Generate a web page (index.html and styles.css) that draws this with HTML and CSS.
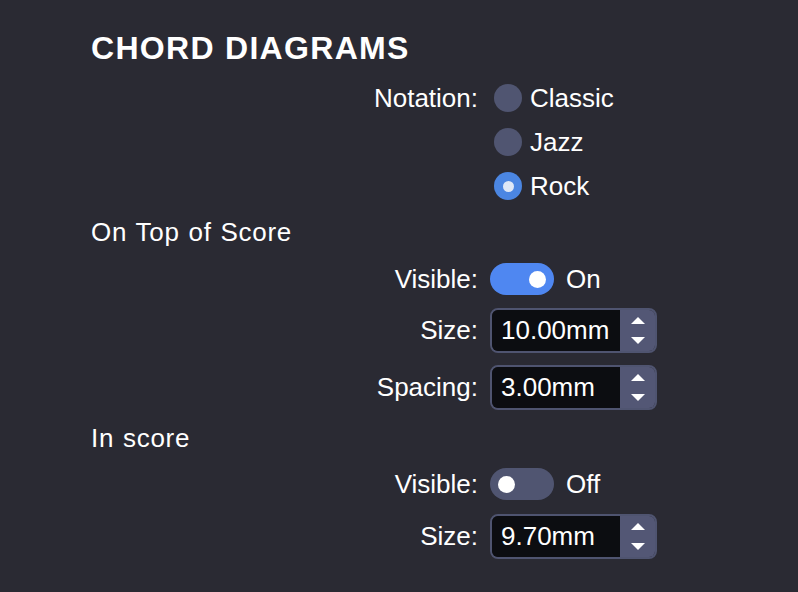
FILE: index.html
```html
<!DOCTYPE html>
<html lang="en">

<head>
    <meta charset="UTF-8">
    <title>Chord Diagrams</title>
    <link rel="stylesheet" href="styles.css">
</head>

<body>
    <div class="panel">
        <h2 class="title">CHORD DIAGRAMS</h2>
        <div class="form">
            <div class="label label-top">Notation:</div>
            <div class="radios">
                <label class="radio"><span class="dot"></span>Classic</label>
                <label class="radio"><span class="dot"></span>Jazz</label>
                <label class="radio"><span class="dot checked"></span>Rock</label>
            </div>

            <div class="section">On Top of Score</div>

            <div class="label row-toggle">Visible:</div>
            <div class="control row-toggle">
                <span class="toggle on"><span class="knob"></span></span>
                <span class="toggle-text">On</span>
            </div>

            <div class="label row-spin">Size:</div>
            <div class="control row-spin">
                <div class="spin">
                    <span class="spin-value">10.00mm</span>
                    <span class="spin-buttons">
                        <span class="arrow up"></span>
                        <span class="arrow down"></span>
                    </span>
                </div>
            </div>

            <div class="label row-spin">Spacing:</div>
            <div class="control row-spin">
                <div class="spin">
                    <span class="spin-value">3.00mm</span>
                    <span class="spin-buttons">
                        <span class="arrow up"></span>
                        <span class="arrow down"></span>
                    </span>
                </div>
            </div>

            <div class="section section-score">In score</div>

            <div class="label row-toggle2">Visible:</div>
            <div class="control row-toggle2">
                <span class="toggle"><span class="knob"></span></span>
                <span class="toggle-text">Off</span>
            </div>

            <div class="label row-spin">Size:</div>
            <div class="control row-spin">
                <div class="spin">
                    <span class="spin-value">9.70mm</span>
                    <span class="spin-buttons">
                        <span class="arrow up"></span>
                        <span class="arrow down"></span>
                    </span>
                </div>
            </div>
        </div>
    </div>
</body>

</html>
```

FILE: styles.css
```css
html,
body {
    margin: 0;
    padding: 0;
    background-color: #2a2a33;
    color: #fff;
    font-family: "Liberation Sans", Arial, sans-serif;
    font-size: 26px;
}

* {
    box-sizing: border-box;
}

.panel {
    width: 798px;
    height: 592px;
    padding: 30px 0 0 91px;
    overflow: hidden;
}

.title {
    margin: 0 0 10px 0;
    height: 36px;
    font-size: 32px;
    line-height: 36px;
    font-weight: bold;
    letter-spacing: 1.3px;
}

.form {
    display: grid;
    grid-template-columns: 387px auto;
    column-gap: 12px;
    align-items: center;
}

.label {
    text-align: right;
    line-height: 44px;
}

.label-top {
    align-self: start;
}

/* radios */
.radios {
    display: flex;
    flex-direction: column;
}

.radio {
    display: flex;
    align-items: center;
    height: 44px;
    margin-left: 4px;
    gap: 8px;
}

.dot {
    width: 28px;
    height: 28px;
    border-radius: 50%;
    background-color: #505571;
    display: flex;
    align-items: center;
    justify-content: center;
}

.dot.checked {
    background-color: #4b86e2;
}

.dot.checked::after {
    content: "";
    width: 11px;
    height: 11px;
    border-radius: 50%;
    background-color: #dfe8f6;
}

.section {
    grid-column: 1 / -1;
    height: 48px;
    line-height: 48px;
    letter-spacing: 0.7px;
    word-spacing: 1px;
}

.section-score {
    height: 44px;
    line-height: 44px;
}

.row-toggle {
    height: 46px;
    line-height: 46px;
}

.row-toggle2 {
    height: 48px;
    line-height: 48px;
}

.row-spin {
    height: 57px;
    line-height: 57px;
}

.control {
    display: flex;
    align-items: center;
}

/* toggle */
.toggle {
    width: 64px;
    height: 32px;
    border-radius: 16px;
    background-color: #505571;
    display: flex;
    align-items: center;
    padding: 0 8px;
}

.toggle.on {
    background-color: #4f87f1;
    justify-content: flex-end;
}

.knob {
    width: 17px;
    height: 17px;
    border-radius: 50%;
    background-color: #fff;
}

.toggle-text {
    margin-left: 12px;
    line-height: 32px;
}

/* spin box */
.spin {
    display: flex;
    width: 167px;
    height: 45px;
    border: 2px solid #4f5470;
    border-radius: 8px;
    overflow: hidden;
    line-height: normal;
}

.spin-value {
    flex: 1;
    background-color: #0c0d11;
    padding-left: 9px;
    display: flex;
    align-items: center;
}

.spin-buttons {
    width: 35px;
    background-color: #535775;
    display: flex;
    flex-direction: column;
    align-items: center;
    justify-content: center;
    gap: 13px;
}

.arrow {
    width: 0;
    height: 0;
    border-left: 7px solid transparent;
    border-right: 7px solid transparent;
}

.arrow.up {
    border-bottom: 7px solid #fff;
}

.arrow.down {
    border-top: 7px solid #fff;
}
```
